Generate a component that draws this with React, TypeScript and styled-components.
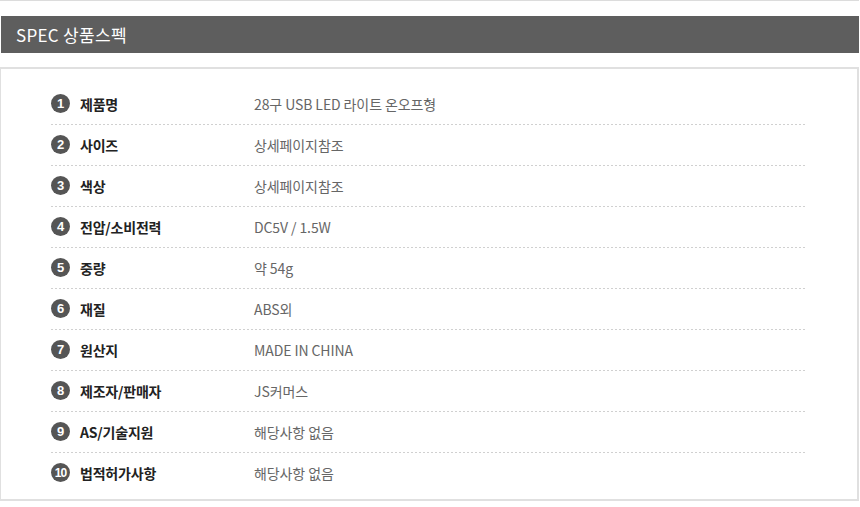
import React from "react";
import styled, { createGlobalStyle } from "styled-components";

const Global = createGlobalStyle`
  html, body { margin: 0; padding: 0; background: #fff; }
  body { font-family: "Noto Sans CJK KR", "Noto Sans", sans-serif; }
`;

const Page = styled.div`
  width: 859px;
  display: flex;
  flex-direction: column;
`;

const TopLine = styled.div`
  height: 1px;
  background: #dcdcdc;
  margin-bottom: 15px;
`;

const Header = styled.div`
  height: 37px;
  background: #5e5e5e;
  color: #fff;
  display: flex;
  align-items: center;
  padding-left: 15px;
  font-size: 17px;
  letter-spacing: 0.3px;
  margin-left: 1px;
  margin-bottom: 14px;
`;

const Box = styled.div`
  width: 859px;
  box-sizing: border-box;
  border: 2px solid #e0e0e0;
  border-left-width: 1px;
  padding: 15px 52px 6px 50px;
  display: flex;
  flex-direction: column;
`;

const Row = styled.div<{ $last?: boolean }>`
  height: 40px;
  display: flex;
  align-items: center;
  padding-bottom: ${(p) => (p.$last ? "0" : "1px")};
  background-image: ${(p) =>
    p.$last ? "none" : "linear-gradient(to right, #d0d0d0 50%, transparent 50%)"};
  background-size: 4px 1px;
  background-repeat: repeat-x;
  background-position: left bottom;
`;

const Num = styled.span<{ $small?: boolean }>`
  width: 19px;
  height: 19px;
  border-radius: 50%;
  background: #555;
  color: #fff;
  font-family: "Liberation Sans", Arial, sans-serif;
  font-weight: bold;
  font-size: ${(p) => (p.$small ? "12px" : "13px")};
  letter-spacing: ${(p) => (p.$small ? "-1px" : "0")};
  display: flex;
  align-items: center;
  justify-content: center;
  flex-shrink: 0;
  margin-right: 10px;
  margin-top: -1px;
`;

const Label = styled.span`
  width: 174px;
  font-size: 14px;
  font-weight: bold;
  color: #222;
  letter-spacing: -0.2px;
`;

const Value = styled.span`
  font-size: 14px;
  color: #666;
  letter-spacing: -0.1px;
`;

const items: [string, string][] = [
  ["제품명", "28구 USB LED 라이트 온오프형"],
  ["사이즈", "상세페이지참조"],
  ["색상", "상세페이지참조"],
  ["전압/소비전력", "DC5V / 1.5W"],
  ["중량", "약 54g"],
  ["재질", "ABS외"],
  ["원산지", "MADE IN CHINA"],
  ["제조자/판매자", "JS커머스"],
  ["AS/기술지원", "해당사항 없음"],
  ["법적허가사항", "해당사항 없음"],
];

export default function App() {
  return (
    <Page>
      <Global />
      <TopLine />
      <Header>SPEC 상품스펙</Header>
      <Box>
        {items.map(([k, v], i) => (
          <Row key={k} $last={i === items.length - 1}>
            <Num $small={i >= 9}>{i + 1}</Num>
            <Label>{k}</Label>
            <Value>{v}</Value>
          </Row>
        ))}
      </Box>
    </Page>
  );
}
